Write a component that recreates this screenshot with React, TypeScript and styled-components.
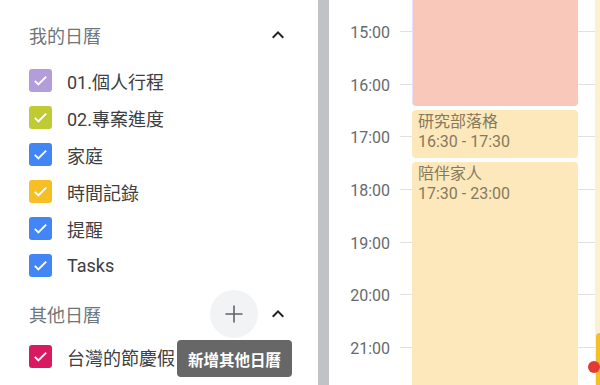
import styled, { createGlobalStyle } from "styled-components";

const GlobalStyle = createGlobalStyle`
  html, body {
    margin: 0;
    padding: 0;
    background: #fff;
  }
  body {
    font-family: Roboto, "Noto Sans CJK TC", sans-serif;
  }
`;

const Page = styled.div`
  display: flex;
  width: 600px;
  height: 385px;
  overflow: hidden;
  background: #fff;
`;

const Sidebar = styled.div`
  position: relative;
  width: 318px;
  flex-shrink: 0;
  padding: 11px 28px 0 29px;
  box-sizing: border-box;
  overflow: hidden;
`;

const SectionHeader = styled.div<{ $top?: number }>`
  display: flex;
  align-items: center;
  height: 48px;
  margin-top: ${(p) => p.$top ?? 0}px;
`;

const SectionTitle = styled.div`
  flex: 1;
  font-size: 18px;
  color: #70757a;
  font-family: "Noto Sans CJK TC", sans-serif;
`;

const IconButton = styled.div<{ $round?: boolean }>`
  display: flex;
  align-items: center;
  justify-content: center;
  width: ${(p) => (p.$round ? 48 : 24)}px;
  height: ${(p) => (p.$round ? 48 : 24)}px;
  border-radius: 50%;
  background: ${(p) => (p.$round ? "#f1f3f4" : "transparent")};
  margin-left: 8px;
`;

const List = styled.div<{ $top?: number }>`
  display: flex;
  flex-direction: column;
  margin-top: ${(p) => p.$top ?? 0}px;
`;

const Row = styled.div`
  display: flex;
  align-items: center;
  height: 37px;
  gap: 15px;
  white-space: nowrap;
`;

const Box = styled.div<{ $color: string }>`
  width: 23px;
  height: 23px;
  border-radius: 3px;
  background: ${(p) => p.$color};
  display: flex;
  align-items: center;
  justify-content: center;
  flex-shrink: 0;
`;

const Label = styled.div`
  font-size: 18px;
  color: #3c4043;
`;

const Tooltip = styled.div`
  position: absolute;
  left: 177px;
  top: 340px;
  width: 115px;
  height: 37px;
  border-radius: 4px;
  background: #676767;
  color: #fff;
  font-family: "Noto Sans CJK TC", sans-serif;
  font-size: 15.5px;
  font-weight: 700;
  display: flex;
  align-items: center;
  justify-content: center;
  box-sizing: border-box;
`;

const Divider = styled.div`
  width: 11px;
  flex-shrink: 0;
  background: #c0c2c5;
`;

const Calendar = styled.div`
  position: relative;
  flex: 1;
  padding-top: 31px;
  overflow: hidden;
`;

const HourRow = styled.div`
  display: flex;
  align-items: flex-start;
  height: 52.67px;
`;

const HourLabel = styled.div`
  width: 61px;
  height: 20px;
  padding-right: 10px;
  text-align: right;
  font-size: 16px;
  line-height: 20px;
  color: #666a6e;
  transform: translateY(-40%);
`;

const HourLine = styled.div`
  flex: 1;
  border-top: 1px solid #dfe1e4;
`;

const Event = styled.div<{ $bg: string; $edge?: string }>`
  position: absolute;
  left: 83px;
  width: 166px;
  background: ${(p) => p.$bg};
  border-radius: 4px;
  box-sizing: border-box;
  padding: 2px 6px;
  border-left: ${(p) => (p.$edge ? `1px solid ${p.$edge}` : "none")};
`;

const EventText = styled.div`
  font-size: 16px;
  line-height: 20px;
  color: #857a5f;
  white-space: nowrap;
`;

const NextDay = styled.div`
  position: absolute;
  left: 266px;
  top: 0;
  bottom: 0;
  width: 20px;
  background: #fdf0cf;
`;

const NextEvent = styled.div`
  position: absolute;
  left: 267px;
  top: 333px;
  bottom: 0;
  width: 20px;
  border-radius: 4px 0 0 0;
  background: #f6bf26;
`;

const NowDot = styled.div`
  position: absolute;
  left: 259px;
  top: 361px;
  width: 12px;
  height: 12px;
  border-radius: 50%;
  background: #e53935;
`;

const Check = () => (
  <svg width="17" height="17" viewBox="0 0 24 24">
    <path d="M4 12.5l5 5L20 6.5" fill="none" stroke="#fff" strokeWidth="2.8" />
  </svg>
);

const ChevronUp = () => (
  <svg width="24" height="24" viewBox="0 0 24 24">
    <path d="M12 8l-6 6 1.41 1.41L12 10.83l4.59 4.58L18 14z" fill="#202124" />
  </svg>
);

const Plus = () => (
  <svg width="24" height="24" viewBox="0 0 24 24">
    <path d="M12 3.5v17M3.5 12h17" stroke="#5f6368" strokeWidth="1.6" />
  </svg>
);

const myCalendars = [
  { name: "01.個人行程", color: "#b39ddb" },
  { name: "02.專案進度", color: "#c0ca33" },
  { name: "家庭", color: "#4285f4" },
  { name: "時間記錄", color: "#f6bf26" },
  { name: "提醒", color: "#4285f4" },
  { name: "Tasks", color: "#4285f4" },
];

const hours = ["15:00", "16:00", "17:00", "18:00", "19:00", "20:00", "21:00"];

export default function App() {
  return (
    <Page>
      <GlobalStyle />
      <Sidebar>
        <SectionHeader>
          <SectionTitle>我的日曆</SectionTitle>
          <IconButton>
            <ChevronUp />
          </IconButton>
        </SectionHeader>
        <List $top={3}>
          {myCalendars.map((c) => (
            <Row key={c.name}>
              <Box $color={c.color}>
                <Check />
              </Box>
              <Label>{c.name}</Label>
            </Row>
          ))}
        </List>
        <SectionHeader $top={6}>
          <SectionTitle>其他日曆</SectionTitle>
          <IconButton $round>
            <Plus />
          </IconButton>
          <IconButton>
            <ChevronUp />
          </IconButton>
        </SectionHeader>
        <List>
          <Row>
            <Box $color="#d81b60">
              <Check />
            </Box>
            <Label>台灣的節慶假日</Label>
          </Row>
        </List>
        <Tooltip>新增其他日曆</Tooltip>
      </Sidebar>
      <Divider />
      <Calendar>
        {hours.map((h) => (
          <HourRow key={h}>
            <HourLabel>{h}</HourLabel>
            <HourLine />
          </HourRow>
        ))}
        <NextDay />
        <NextEvent />
        <NowDot />
        <Event $bg="#f9c8ba" $edge="#e9def2" style={{ top: -10, height: 116 }} />
        <Event $bg="#fce8ba" style={{ top: 110, height: 48 }}>
          <EventText>研究部落格</EventText>
          <EventText>16:30 - 17:30</EventText>
        </Event>
        <Event $bg="#fce8ba" style={{ top: 162, height: 240 }}>
          <EventText>陪伴家人</EventText>
          <EventText>17:30 - 23:00</EventText>
        </Event>
      </Calendar>
    </Page>
  );
}
